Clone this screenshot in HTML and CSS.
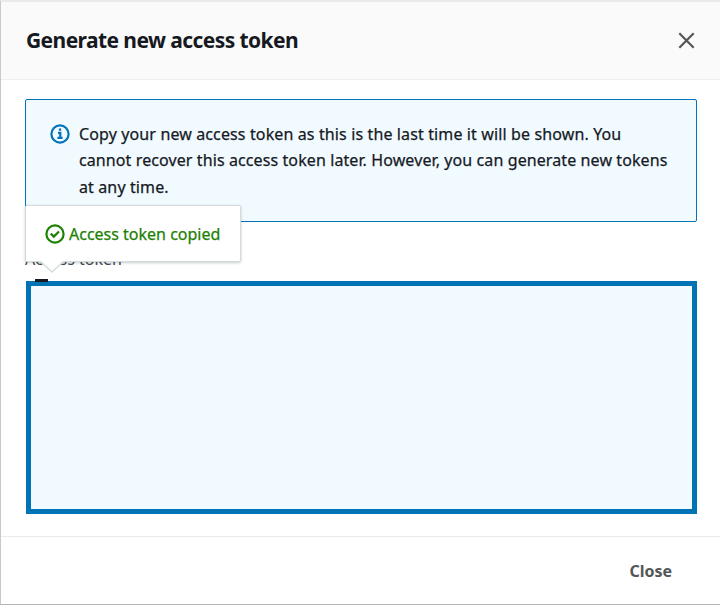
FILE: index.html
```html
<!DOCTYPE html>
<html lang="en">
<head>
<meta charset="utf-8">
<title>Generate new access token</title>
<link rel="stylesheet" href="styles.css">
</head>
<body>
<div class="modal" role="dialog" aria-labelledby="title">
  <header class="header">
    <h1 class="title" id="title">Generate new access token</h1>
    <svg class="dismiss" viewBox="0 0 17 17" role="img" aria-label="Dismiss"><path d="M1.3 1.3 15.7 15.7M15.7 1.3 1.3 15.7"/></svg>
  </header>
  <main class="content">
    <div class="alert">
      <svg class="icon info" viewBox="0 0 20 20" aria-hidden="true"><circle cx="10" cy="10" r="8.6"/><path d="M8 8.9h2.3v4.9M7.4 13.9h5.2M8.9 5.6h2.3"/></svg>
      <p class="message"><span class="line first">Copy your new access token as this is the last time it will be shown. You</span> <span class="line second">cannot recover this access token later. However, you can generate new tokens</span> <span class="line third">at any time.</span></p>
    </div>
    <div class="field">
      <div class="label">Access token</div>
      <div class="copy-icon"></div>
      <div class="popover" role="status">
        <svg class="icon success" viewBox="0 0 20 20" aria-hidden="true"><circle cx="10" cy="10" r="8.6"/><path d="m5.8 9.6 3 3 5.2-5.1"/></svg>
        <span class="copied">Access token copied</span>
      </div>
    </div>
    <div class="token-box"></div>
  </main>
  <footer class="footer"><span class="close">Close</span></footer>
</div>
</body>
</html>
```
FILE: styles.css
```css
* { box-sizing: border-box; }

body {
  margin: 0;
  background: #fff;
  color: #16191f;
  font-family: "Noto Sans", "Open Sans", sans-serif;
}

.modal {
  display: flex;
  flex-direction: column;
  width: 720px;
  height: 605px;
  border-top: 2px solid #eaeaea;
  border-left: 1px solid #c9c9c9;
  border-bottom: 1px solid #b5b5b5;
}

.header {
  display: flex;
  align-items: center;
  justify-content: space-between;
  height: 78px;
  padding: 0 25px 0 25px;
  background: #fafafa;
  border-bottom: 1px solid #eeeeee;
}

.title {
  margin: -2px 0 0;
  font-size: 21px;
  line-height: 28px;
  font-weight: 700;
  letter-spacing: -0.58px;
  white-space: nowrap;
}

.dismiss {
  width: 17px;
  height: 17px;
  fill: none;
  stroke: #545658;
  stroke-width: 2.2;
}

.content {
  height: 456px;
  padding: 19px 23px 0 24px;
}

.alert {
  display: flex;
  height: 123px;
  padding: 21px 24px;
  gap: 9px;
  background: #f1faff;
  border: 1px solid #0073bb;
  border-radius: 2px;
}

.icon {
  flex: none;
  width: 20px;
  height: 20px;
  fill: none;
  stroke: currentColor;
  stroke-width: 2.2;
}

.info { margin-top: 3px; color: #0073bb; }

.message {
  margin: 0;
  font-size: 16px;
  line-height: 26.4px;
  -webkit-text-stroke: 0.25px currentColor;
}

.line { display: block; width: max-content; white-space: nowrap; }

.first { letter-spacing: 0.125px; }

.second { letter-spacing: 0.1px; }

.third { letter-spacing: 0.12px; }

.field { position: relative; height: 59px; }

.label {
  padding-top: 27px;
  color: #45494e;
  font-size: 16px;
  line-height: 21px;
}

.copy-icon {
  position: absolute;
  top: 57px;
  left: 10px;
  width: 13px;
  height: 3px;
  background: #16191f;
}

.popover {
  position: absolute;
  top: -17px;
  left: 0;
  display: flex;
  align-items: center;
  gap: 4px;
  width: 216px;
  height: 57px;
  padding-left: 19px;
  background: #fff;
  border: 1px solid #d5dbdb;
  border-radius: 2px;
  box-shadow: 0 1px 3px rgba(0, 28, 36, 0.22);
  color: #1d8102;
}

.popover::after {
  position: absolute;
  top: 55px;
  left: 15px;
  width: 22px;
  height: 10px;
  background: #fff;
  clip-path: polygon(0 0, 100% 0, 50% 100%);
  content: "";
}

.popover::before {
  position: absolute;
  top: 56px;
  left: 14px;
  width: 24px;
  height: 11px;
  background: #d5dbdb;
  clip-path: polygon(0 0, 100% 0, 50% 100%);
  content: "";
}

.copied {
  font-size: 16px;
  line-height: 24px;
  white-space: nowrap;
  -webkit-text-stroke: 0.25px currentColor;
}

.token-box {
  width: 671px;
  height: 233px;
  margin-left: 1px;
  background: #f1faff;
  border: 5px solid #0073b5;
}

.footer {
  display: flex;
  flex: 1;
  align-items: center;
  justify-content: flex-end;
  padding-right: 48px;
  border-top: 1px solid #eaeaea;
}

.close { color: #545658; font-size: 16px; font-weight: 700; }
```
